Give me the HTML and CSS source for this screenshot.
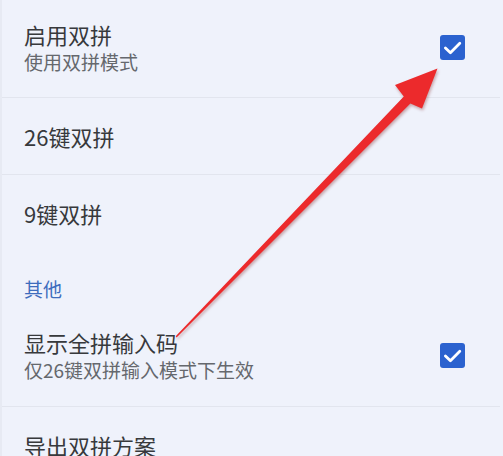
FILE: index.html
```html
<!DOCTYPE html>
<html lang="zh">
<head>
<meta charset="utf-8">
<link rel="stylesheet" href="styles.css">
</head>
<body>
<div class="screen">
  <div class="list">
    <div class="row row-first">
      <div class="texts">
        <div class="title">启用双拼</div>
        <div class="sub">使用双拼模式</div>
      </div>
      <span class="check"><svg viewBox="0 0 24 24" width="25" height="25"><path d="M5.2 12.4 L10 17 L19 8" fill="none" stroke="#fff" stroke-width="2.7" stroke-linecap="round" stroke-linejoin="round"/></svg></span>
    </div>
    <div class="row row-single">
      <div class="title">26键双拼</div>
    </div>
    <div class="row row-single no-border">
      <div class="title">9键双拼</div>
    </div>
    <div class="category">其他</div>
    <div class="row row-double">
      <div class="texts">
        <div class="title">显示全拼输入码</div>
        <div class="sub">仅26键双拼输入模式下生效</div>
      </div>
      <span class="check"><svg viewBox="0 0 24 24" width="25" height="25"><path d="M5.2 12.4 L10 17 L19 8" fill="none" stroke="#fff" stroke-width="2.7" stroke-linecap="round" stroke-linejoin="round"/></svg></span>
    </div>
    <div class="row row-single no-border">
      <div class="title">导出双拼方案</div>
    </div>
  </div>
  <svg class="arrow" viewBox="0 0 503 456" width="503" height="456">
    <polygon points="175.7,336.3 403.8,96.6 395,85 437.5,68.5 422,108.5 410.4,103.4 176.6,337.6" fill="#ec2a2c"/>
  </svg>
</div>
</body>
</html>
```
FILE: styles.css
```css
html, body {
  margin: 0;
  padding: 0;
}
body {
  width: 503px;
  height: 456px;
  overflow: hidden;
  background: #eff2fb;
  font-family: "Noto Sans CJK SC", "Noto Sans", sans-serif;
}
.screen {
  position: relative;
  width: 503px;
  height: 456px;
  overflow: hidden;
  border-left: 2px solid #e7eaf3;
  box-sizing: border-box;
}
.list {
  display: flex;
  flex-direction: column;
}
.row {
  display: flex;
  align-items: center;
  justify-content: space-between;
  padding: 0 35px 0 22px;
  margin-right: 3px;
  border-bottom: 1px solid #e2e5ee;
  box-sizing: border-box;
}
.no-border {
  border-bottom: none;
}
.row-first {
  height: 98px;
  padding-bottom: 2px;
}
.row-single {
  height: 77px;
}
.row-single.no-border {
  height: 76px;
}
.row-double {
  height: 102px;
}
.texts {
  display: flex;
  flex-direction: column;
}
.title {
  font-size: 22px;
  line-height: 27px;
  color: #37393c;
}
.sub {
  font-size: 19px;
  line-height: 27px;
  color: #65686d;
}
.check {
  width: 25px;
  height: 25px;
  border-radius: 3px;
  background: #2b62cf;
  display: flex;
  align-items: center;
  justify-content: center;
}
.check svg {
  display: block;
}
.category {
  height: 54px;
  padding: 25px 0 0 22px;
  box-sizing: border-box;
  font-size: 19px;
  line-height: 26px;
  color: #3e6cbd;
}
.arrow {
  position: absolute;
  left: -2px;
  top: 0;
  filter: drop-shadow(1px 2px 1.5px rgba(120, 20, 20, 0.35));
  pointer-events: none;
}
```
